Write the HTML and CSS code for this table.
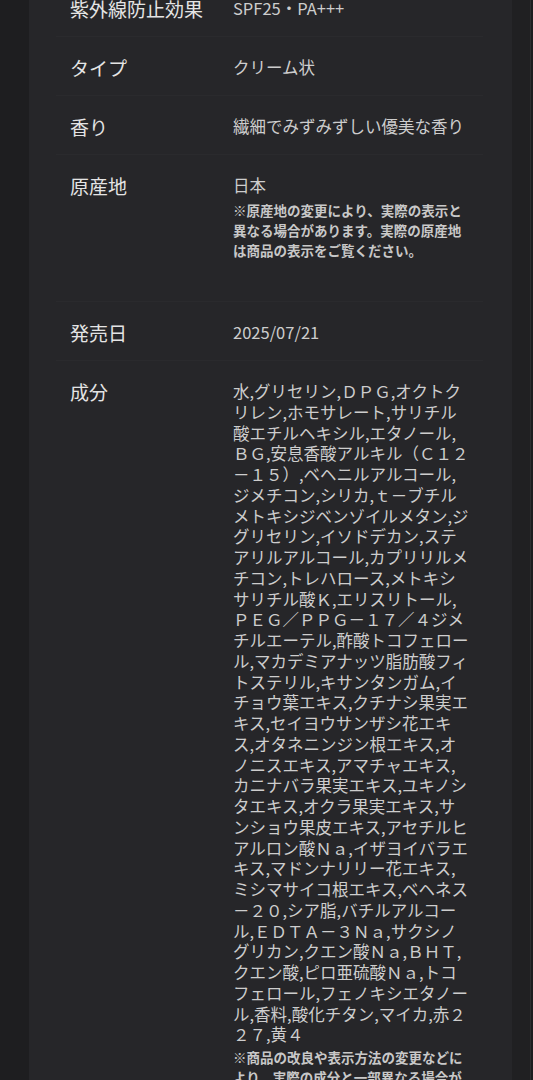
FILE: index.html
```html
<!DOCTYPE html>
<html lang="ja">
<head>
<meta charset="utf-8">
<title>商品詳細</title>
<link rel="stylesheet" href="styles.css">
</head>
<body>
<div class="page">
  <div class="side side-left"></div>
  <main class="panel">
    <dl class="specs">
      <div class="row row-first">
        <dt class="label">紫外線防止効果</dt>
        <dd class="value">SPF25・PA+++</dd>
      </div>
      <div class="row">
        <dt class="label">タイプ</dt>
        <dd class="value">クリーム状</dd>
      </div>
      <div class="row">
        <dt class="label">香り</dt>
        <dd class="value">繊細でみずみずしい優美な香り</dd>
      </div>
      <div class="row">
        <dt class="label">原産地</dt>
        <dd class="value">日本
          <p class="note">※原産地の変更により、実際の表示と異なる場合があります。実際の原産地は商品の表示をご覧ください。</p>
        </dd>
      </div>
      <div class="row">
        <dt class="label">発売日</dt>
        <dd class="value">2025/07/21</dd>
      </div>
      <div class="row row-last">
        <dt class="label">成分</dt>
        <dd class="value">
          <p class="ingredients">水,グリセリン,ＤＰＧ,オクトク<br>リレン,ホモサレート,サリチル<br>酸エチルヘキシル,エタノール,<br>ＢＧ,安息香酸アルキル（Ｃ１２<br>－１５）,ベヘニルアルコール,<br>ジメチコン,シリカ,ｔ－ブチル<br>メトキシジベンゾイルメタン,ジ<br>グリセリン,イソドデカン,ステ<br>アリルアルコール,カプリリルメ<br>チコン,トレハロース,メトキシ<br>サリチル酸Ｋ,エリスリトール,<br>ＰＥＧ／ＰＰＧ－１７／４ジメ<br>チルエーテル,酢酸トコフェロー<br>ル,マカデミアナッツ脂肪酸フィ<br>トステリル,キサンタンガム,イ<br>チョウ葉エキス,クチナシ果実エ<br>キス,セイヨウサンザシ花エキ<br>ス,オタネニンジン根エキス,オ<br>ノニスエキス,アマチャエキス,<br>カニナバラ果実エキス,ユキノシ<br>タエキス,オクラ果実エキス,サ<br>ンショウ果皮エキス,アセチルヒ<br>アルロン酸Ｎａ,イザヨイバラエ<br>キス,マドンナリリー花エキス,<br>ミシマサイコ根エキス,ベヘネス<br>－２０,シア脂,バチルアルコー<br>ル,ＥＤＴＡ－３Ｎａ,サクシノ<br>グリカン,クエン酸Ｎａ,ＢＨＴ,<br>クエン酸,ピロ亜硫酸Ｎａ,トコ<br>フェロール,フェノキシエタノー<br>ル,香料,酸化チタン,マイカ,赤２<br>２７,黄４</p>
          <p class="note note-tight">※商品の改良や表示方法の変更などにより、実際の成分と一部異なる場合が</p>
        </dd>
      </div>
    </dl>
  </main>
  <div class="side side-right"></div>
</div>
</body>
</html>
```
FILE: styles.css
```css
html, body {
  margin: 0;
  padding: 0;
  background: #1e1e20;
}

body {
  font-family: "Noto Sans CJK JP", "Noto Sans", sans-serif;
  overflow: hidden;
}

.page {
  display: flex;
  min-height: 1080px;
}

.side-left {
  flex: none;
  width: 29px;
  background: #1e1e20;
}

.panel {
  flex: none;
  width: 483px;
  box-sizing: border-box;
  padding: 0 29px 0 27px;
  background: #262629;
}

.side-right {
  flex: 1;
  background: #202022;
  border-right: 2px solid #1c1c1e;
  box-shadow: inset -1px 0 0 #2d2d2f;
}

.specs {
  margin: -2px 0 0;
}

.row {
  display: grid;
  grid-template-columns: 163px 1fr;
  padding: 20px 0 17px 14px;
  border-bottom: 1px solid #2a2a2d;
}

.row-first {
  padding-top: 0;
}

.row-last {
  border-bottom: none;
}

.label {
  margin: 0;
  font-size: 19px;
  line-height: 21px;
  color: #e4e4e4;
}

.value {
  margin: 0;
  font-size: 16.5px;
  line-height: 21px;
  color: #cdcdcd;
}

.ingredients {
  margin: 0;
  line-height: 20.75px;
}

.note {
  margin: 4px 0 24px;
  max-width: 236px;
  font-size: 13.5px;
  line-height: 20px;
  font-weight: 700;
  color: #c8c8c8;
}

.note-tight {
  margin-top: 2px;
}
```
